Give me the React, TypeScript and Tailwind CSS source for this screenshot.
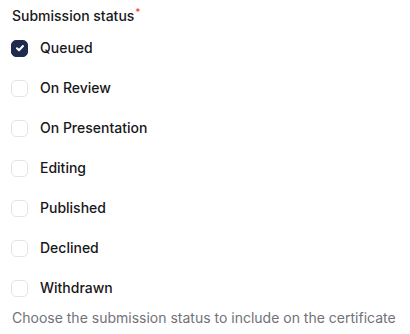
import { useState } from 'react'

const statuses = ['Queued', 'On Review', 'On Presentation', 'Editing', 'Published', 'Declined', 'Withdrawn']

export default function App() {
  const [checked, setChecked] = useState<string[]>(['Queued'])

  const toggle = (s: string) =>
    setChecked(c => (c.includes(s) ? c.filter(x => x !== s) : [...c, s]))

  return (
    <div className="bg-white px-3 pt-1.5 font-['Inter',sans-serif] text-sm">
      <label className="block h-5 leading-5 font-medium text-[#18181b]">
        Submission status<sup className="text-[#ef4444] text-[10px] ml-px">*</sup>
      </label>

      <div className="mt-0.5 flex flex-col">
        {statuses.map(s => {
          const on = checked.includes(s)
          return (
            <button
              key={s}
              onClick={() => toggle(s)}
              className="flex h-10 items-center gap-3 text-left"
            >
              <span
                className={`-ml-px flex h-[17px] w-[17px] items-center justify-center rounded-[5px] border ${
                  on ? 'border-[#1e2b4f] bg-[#1e2b4f]' : 'border-[#e4e4e7] bg-white'
                }`}
              >
                {on && (
                  <svg className="h-3 w-3 text-white" fill="none" stroke="currentColor" viewBox="0 0 24 24">
                    <path strokeLinecap="round" strokeLinejoin="round" strokeWidth={4} d="M6 12.5l4 4L18 8" />
                  </svg>
                )}
              </span>
              <span className="font-medium text-[#18181b]">{s}</span>
            </button>
          )
        })}
      </div>

      <p className="leading-5 text-[#71717a]">Choose the submission status to include on the certificate</p>
    </div>
  )
}
